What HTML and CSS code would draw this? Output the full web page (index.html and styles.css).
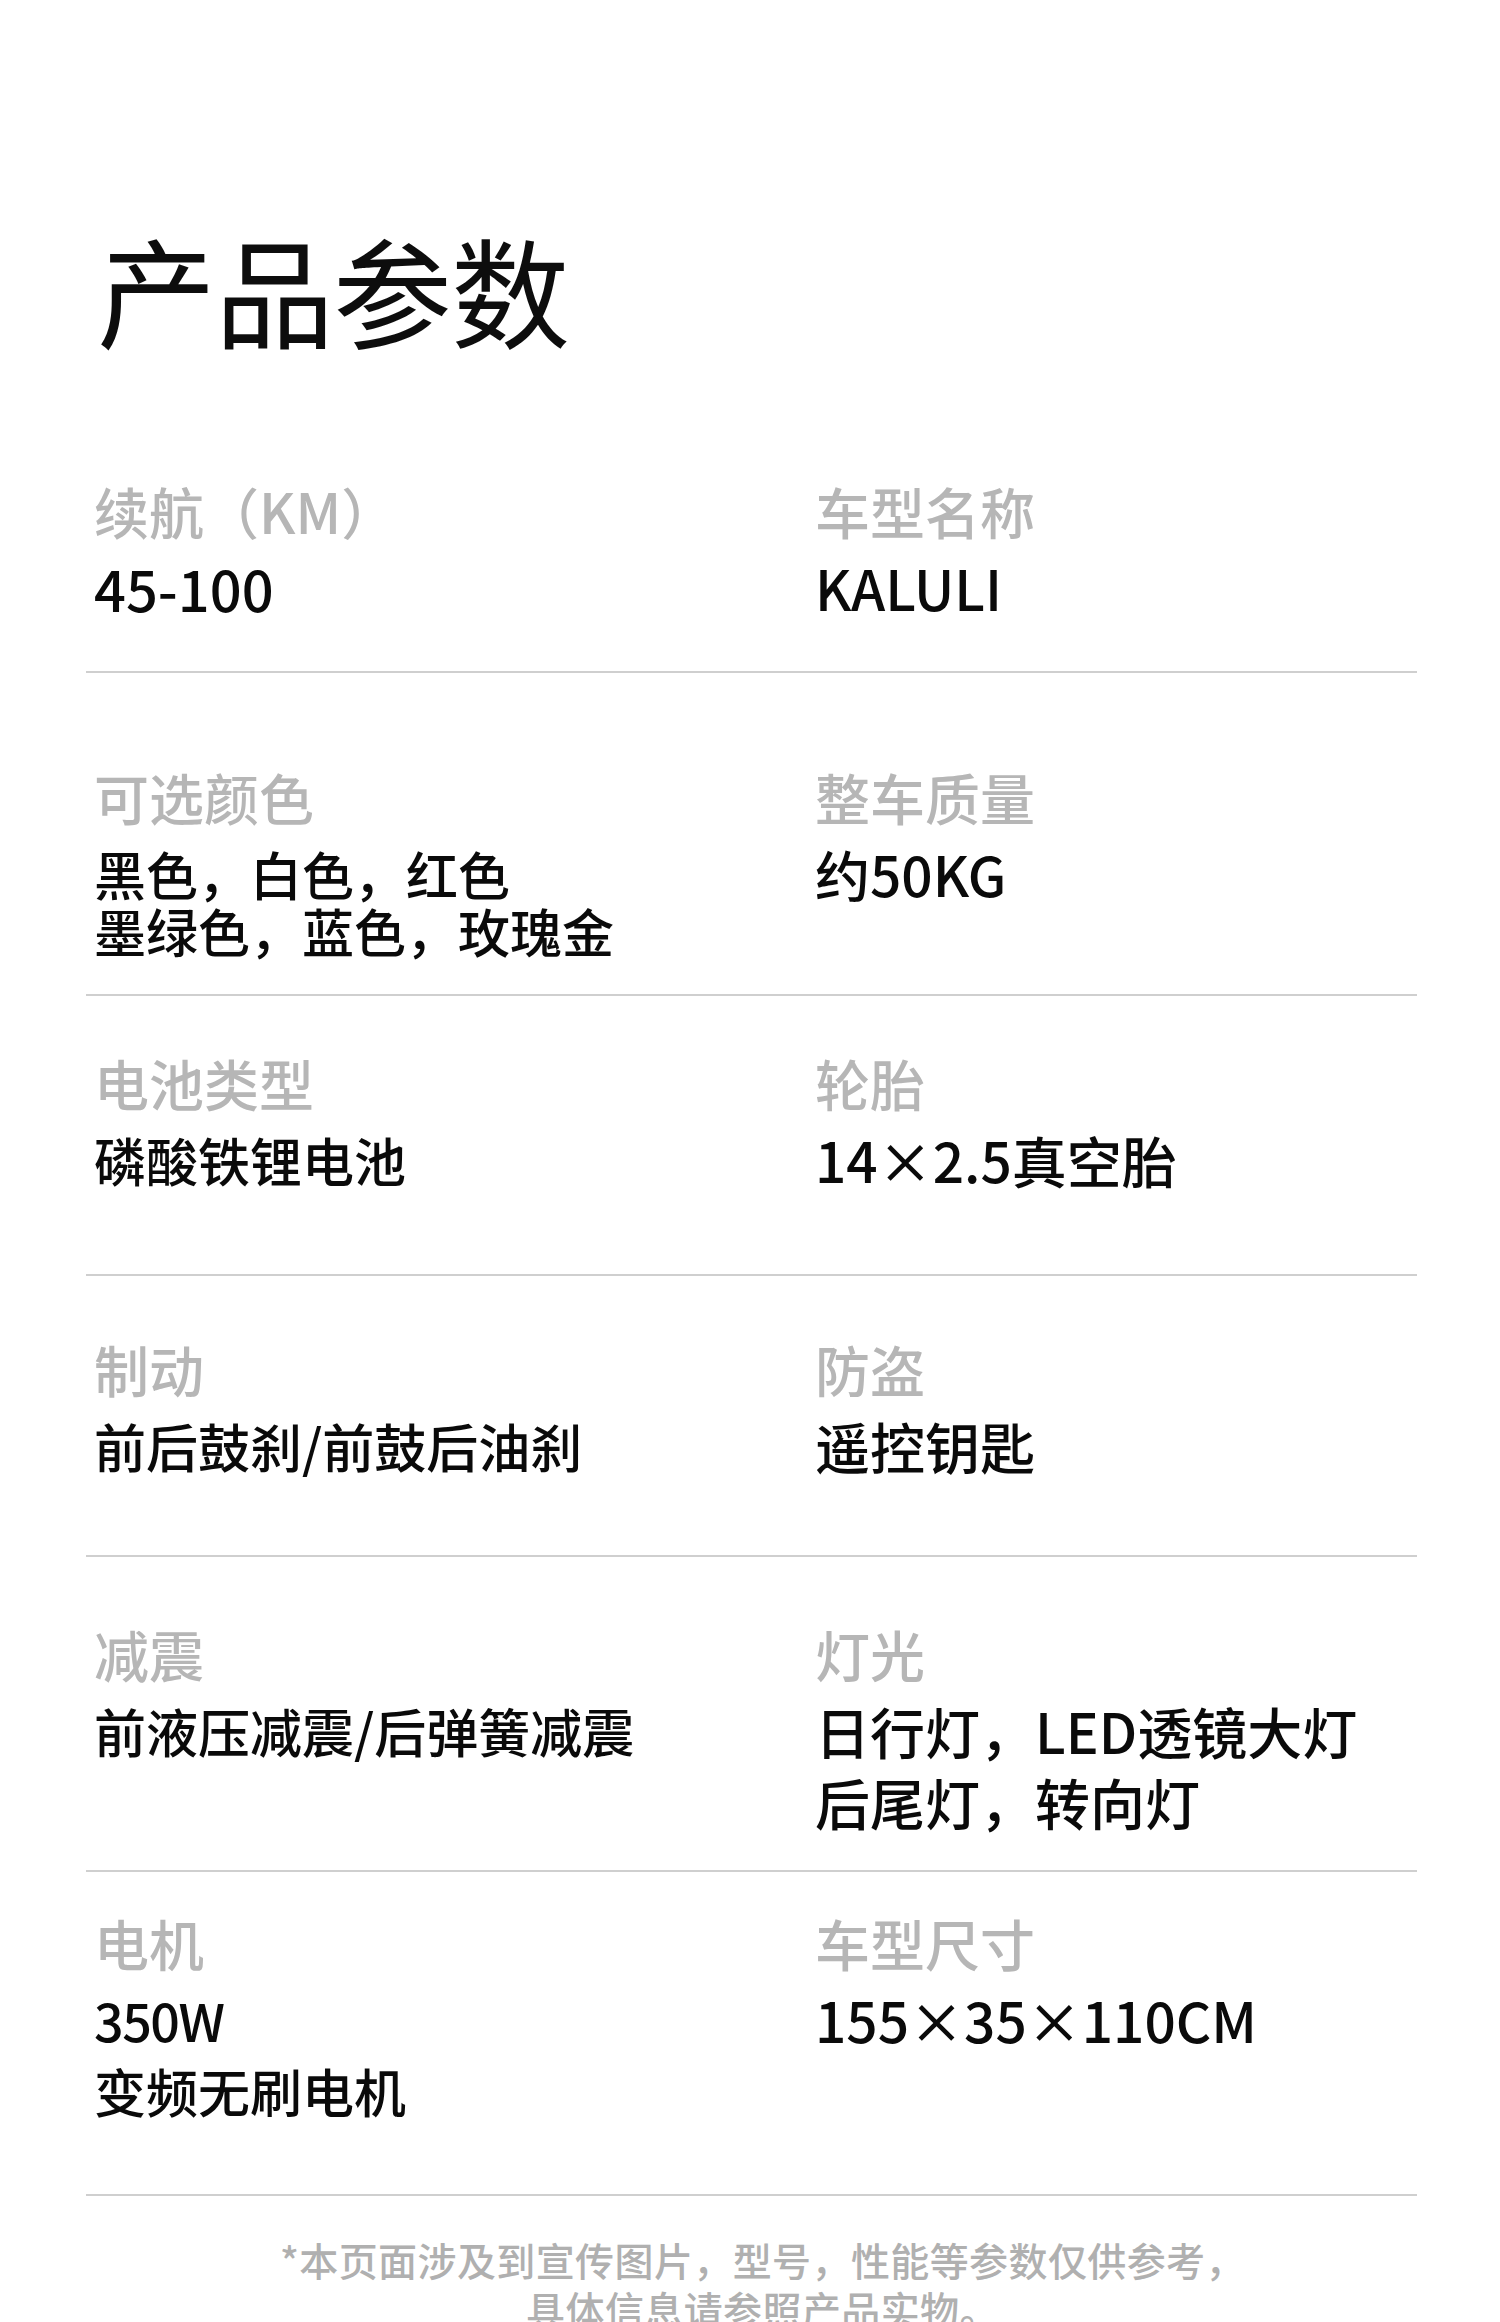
FILE: index.html
```html
<!DOCTYPE html>
<html lang="zh-CN">
<head>
<meta charset="utf-8">
<title>产品参数</title>
<link rel="stylesheet" href="styles.css">
</head>
<body>
<main class="page">
  <h1 class="title">产品参数</h1>

  <section class="row row-1">
    <div class="cell">
      <div class="label">续航（KM）</div>
      <div class="value value-num">45-100</div>
    </div>
    <div class="cell cell-right">
      <div class="label">车型名称</div>
      <div class="value">KALULI</div>
    </div>
  </section>

  <section class="row row-2">
    <div class="cell">
      <div class="label">可选颜色</div>
      <div class="value">黑色，白色，红色<br>墨绿色，蓝色，玫瑰金</div>
    </div>
    <div class="cell cell-right">
      <div class="label">整车质量</div>
      <div class="value">约50KG</div>
    </div>
  </section>

  <section class="row row-3">
    <div class="cell">
      <div class="label">电池类型</div>
      <div class="value">磷酸铁锂电池</div>
    </div>
    <div class="cell cell-right">
      <div class="label">轮胎</div>
      <div class="value">14×2.5真空胎</div>
    </div>
  </section>

  <section class="row row-4">
    <div class="cell">
      <div class="label">制动</div>
      <div class="value">前后鼓刹/前鼓后油刹</div>
    </div>
    <div class="cell cell-right">
      <div class="label">防盗</div>
      <div class="value">遥控钥匙</div>
    </div>
  </section>

  <section class="row row-5">
    <div class="cell">
      <div class="label">减震</div>
      <div class="value value-loose">前液压减震/后弹簧减震</div>
    </div>
    <div class="cell cell-right">
      <div class="label">灯光</div>
      <div class="value value-loose">日行灯，LED透镜大灯<br>后尾灯，转向灯</div>
    </div>
  </section>

  <section class="row row-6">
    <div class="cell">
      <div class="label">电机</div>
      <div class="value value-loose"><span class="tight">350W</span><br>变频无刷电机</div>
    </div>
    <div class="cell cell-right">
      <div class="label">车型尺寸</div>
      <div class="value value-loose">155×35×110CM</div>
    </div>
  </section>

  <footer class="note">*本页面涉及到宣传图片，型号，性能等参数仅供参考，<br>具体信息请参照产品实物。</footer>
</main>
</body>
</html>
```

FILE: styles.css
```css
* {
  box-sizing: border-box;
}

html, body {
  margin: 0;
  padding: 0;
  background: #ffffff;
}

body {
  font-family: "Noto Sans CJK SC", "Noto Sans", sans-serif;
  color: #111111;
  width: 1500px;
  height: 2322px;
  overflow: hidden;
}

.page {
  padding: 0 83px 0 86px;
}

.title {
  margin: 0;
  padding-top: 229px;
  padding-left: 11px;
  font-size: 119px;
  line-height: 1;
  font-weight: 400;
  color: #0d0d0d;
  letter-spacing: -1px;
}

.row {
  display: grid;
  grid-template-columns: 721px 1fr;
  padding-left: 8px;
  border-bottom: 2px solid #cfcfcf;
}

.label {
  font-size: 55px;
  line-height: 1;
  font-weight: 500;
  color: #b6b6b6;
}

.value {
  margin-top: 21px;
  font-size: 52px;
  line-height: 57px;
  font-weight: 500;
  color: #0a0a0a;
}

.cell-right .value {
  font-size: 55px;
}

.value-num {
  font-size: 56px;
}

.tight {
  letter-spacing: -1.5px;
}

.value-loose {
  margin-top: 14px;
  line-height: 71px;
}

.row-1 { padding-top: 135px; padding-bottom: 55px; }
.row-2 { padding-top: 96px;  padding-bottom: 35px; }
.row-3 { padding-top: 59px;  padding-bottom: 86px; }
.row-4 { padding-top: 65px;  padding-bottom: 81px; }
.row-5 { padding-top: 69px;  padding-bottom: 33px; }
.row-6 { padding-top: 43px;  padding-bottom: 68px; }

.note {
  padding-top: 39px;
  padding-left: 22px;
  text-align: center;
  font-size: 39px;
  line-height: 49px;
  font-weight: 500;
  color: #b0b0b0;
  letter-spacing: 0.4px;
}
```
